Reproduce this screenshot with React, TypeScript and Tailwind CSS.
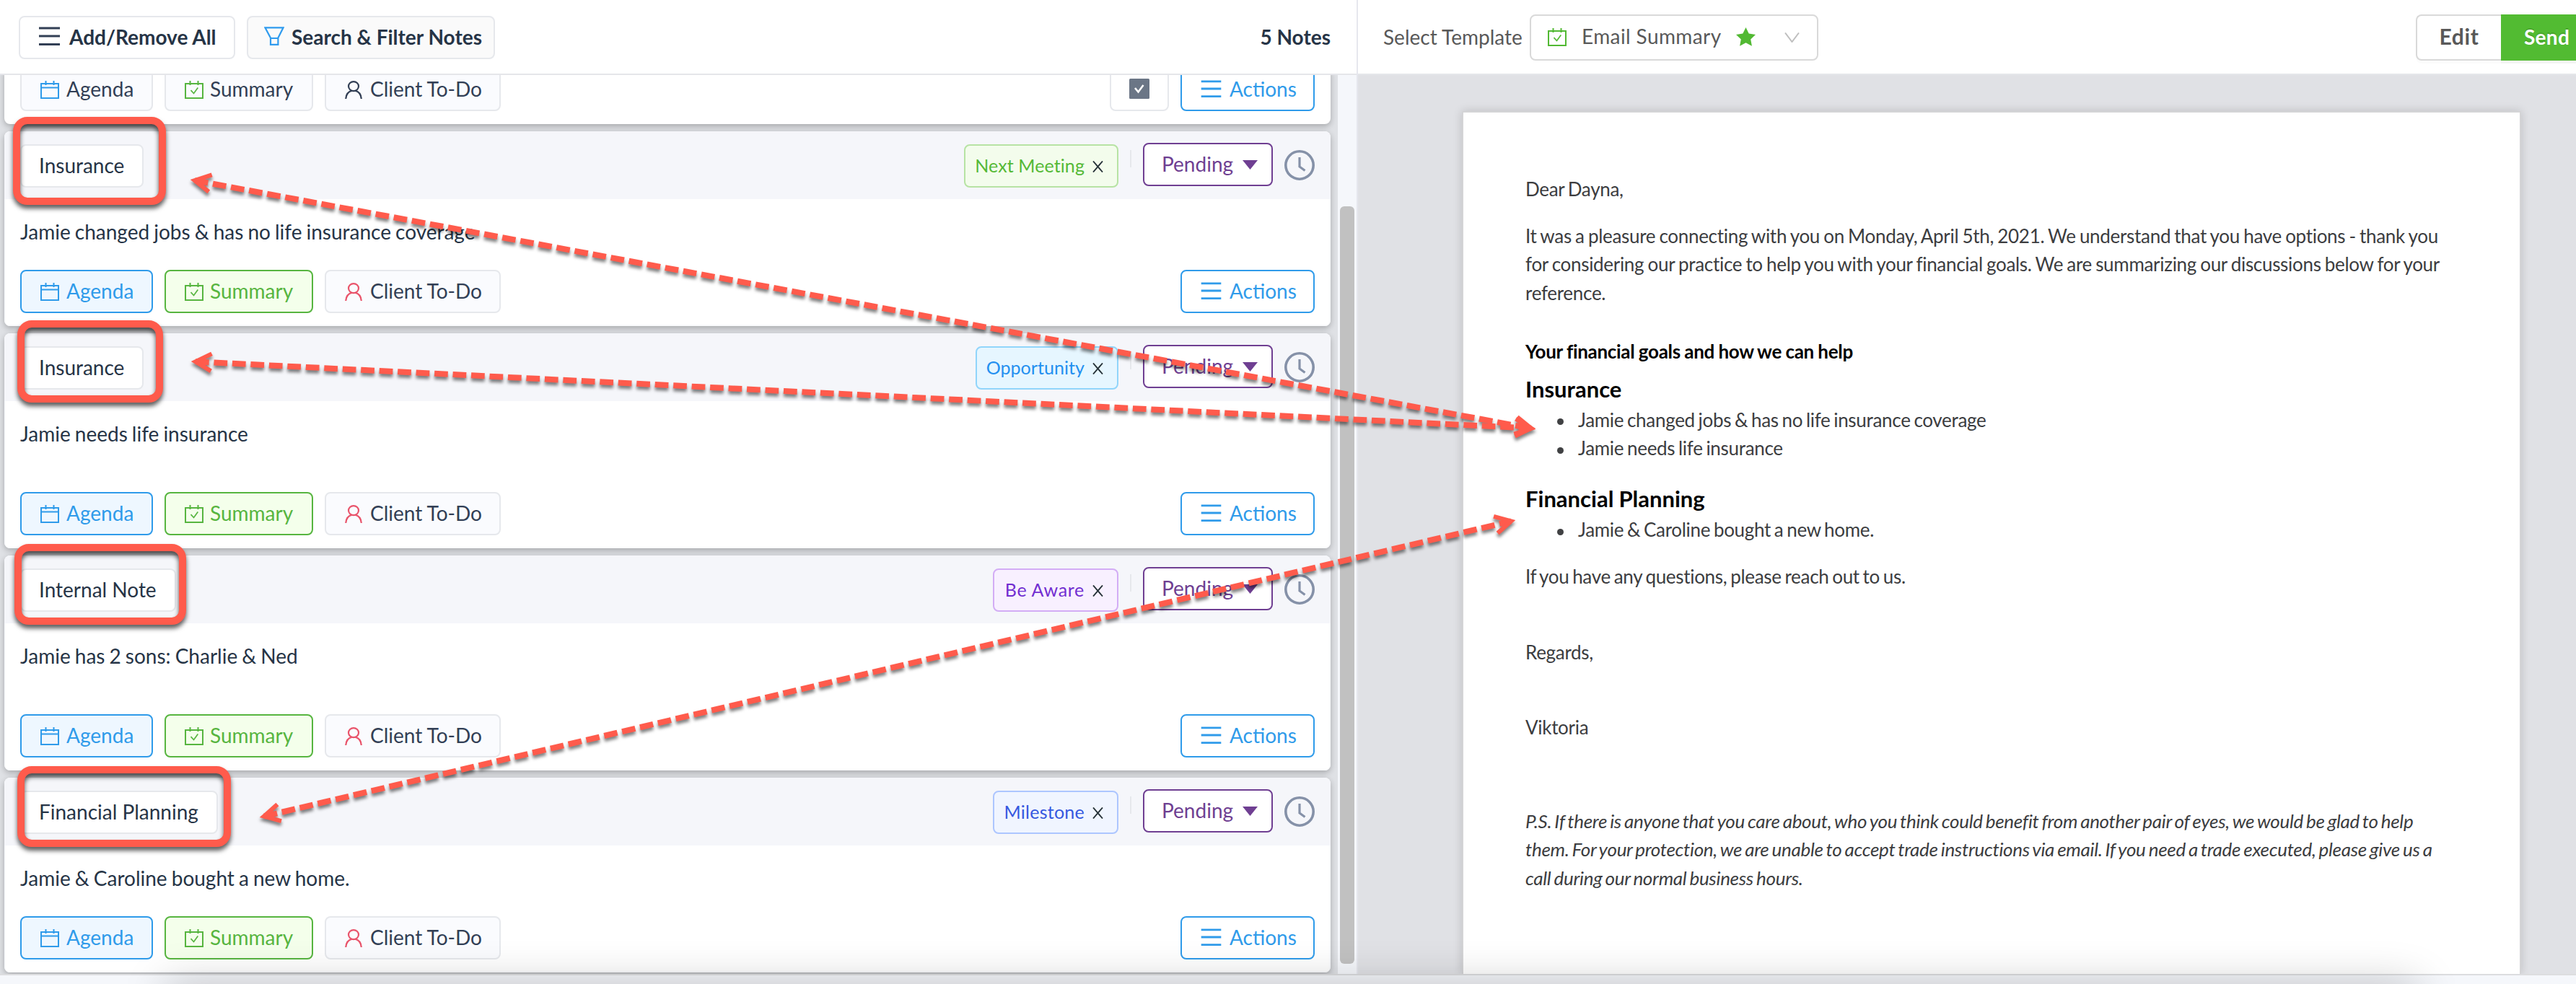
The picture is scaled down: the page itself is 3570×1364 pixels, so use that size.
import type { ReactNode } from 'react'
import clsx from 'clsx'

interface Note {
  id: number
  title: string
  text: string
  tag: string
  tagClass: string
  heightClass: string
}

interface Point {
  x: number
  y: number
}

const notes: Note[] = [
  {
    id: 1,
    title: 'Insurance',
    text: 'Jamie changed jobs & has no life insurance coverage',
    tag: 'Next Meeting',
    tagClass: 'w-[214px] border-[#b7e3a4] bg-[#f3fcec] text-[#55b936] tracking-[0.1px]',
    heightClass: 'h-[270px]',
  },
  {
    id: 2,
    title: 'Insurance',
    text: 'Jamie needs life insurance',
    tag: 'Opportunity',
    tagClass: 'w-[198px] border-[#91d5fb] bg-[#e6f6ff] text-[#2490f0] tracking-[0.05px]',
    heightClass: 'h-[298px]',
  },
  {
    id: 3,
    title: 'Internal Note',
    text: 'Jamie has 2 sons: Charlie & Ned',
    tag: 'Be Aware',
    tagClass: 'w-[174px] border-[#d3adf5] bg-[#f8f0ff] text-[#722ed1] tracking-[0.7px]',
    heightClass: 'h-[298px]',
  },
  {
    id: 4,
    title: 'Financial Planning',
    text: 'Jamie & Caroline bought a new home.',
    tag: 'Milestone',
    tagClass: 'w-[174px] border-[#adc6ff] bg-[#f0f5ff] text-[#3558e0] tracking-[0.25px]',
    heightClass: 'h-[270px]',
  },
]

function MenuIcon({ className }: { className?: string }) {
  return (
    <svg viewBox="0 0 29 26" className={clsx('h-[26px] w-[29px] shrink-0', className)} fill="none" stroke="currentColor" strokeWidth="3">
      <path d="M0 2h29M0 13h29M0 24.5h29" />
    </svg>
  )
}

function FunnelIcon() {
  return (
    <svg viewBox="0 0 28 26" className="h-[26px] w-[28px] shrink-0 text-[#2f9bee]" fill="none" stroke="currentColor" strokeWidth="2.2">
      <path d="M1.4 1.3h25.2L19.4 15.6v9.2H9V15.6L1.4 1.3zM9 16h10.4" />
    </svg>
  )
}

function CalendarIcon({ className, checked }: { className?: string; checked?: boolean }) {
  return (
    <svg viewBox="0 0 26 25" className={clsx('h-[25px] w-[26px] shrink-0', className)} fill="none" stroke="currentColor" strokeWidth="2">
      <path d="M1 4h24v20H1zM7.5 0v6M18.5 0v6" />
      {checked ? <path d="M8.5 13.2l4 4.3 5.8-8" strokeWidth="1.7" /> : <path d="M1 9.5h24" />}
    </svg>
  )
}

function PersonIcon({ className }: { className?: string }) {
  return (
    <svg viewBox="0 0 24 25" className={clsx('h-[25px] w-[24px] shrink-0', className)} fill="none" stroke="currentColor" strokeWidth="2.2">
      <ellipse cx="12" cy="7.6" rx="7" ry="6.5" />
      <path d="M1.2 25c.4-6 4-10.2 8.6-11.4M22.8 25c-.4-6-4-10.2-8.6-11.4" />
    </svg>
  )
}

function ClockIcon() {
  return (
    <svg viewBox="0 0 42 42" className="mt-[26px] size-[42px] shrink-0 text-[#8591a8]" fill="none" stroke="currentColor" strokeWidth="3.6">
      <circle cx="21" cy="21" r="19.2" />
      <path d="M21 10v13l7.5 5.5" strokeWidth="3.2" />
    </svg>
  )
}

function NoteButton({ className, children }: { className?: string; children: ReactNode }) {
  return (
    <button className={clsx('flex h-[60px] shrink-0 items-center rounded-lg border-2 pl-[26px]', className)}>
      {children}
    </button>
  )
}

function NoteActions({ selected }: { selected?: boolean }) {
  return (
    <div className="flex gap-4 whitespace-nowrap text-[28px] leading-[34px]">
      <NoteButton
        className={clsx(
          'w-[184px] gap-[10px]',
          selected ? 'border-[#2f9bea] bg-[#eef7ff] text-[#2f9bea]' : 'border-[#e6e8ec] bg-[#fafbfe] text-[#323f55]'
        )}
      >
        <CalendarIcon className="text-[#2f9bea]" />
        <span className="pb-0.5">Agenda</span>
      </NoteButton>
      <NoteButton
        className={clsx(
          'w-[206px] gap-[9px]',
          selected ? 'border-[#57b540] bg-[#f4ffeb] text-[#57b540]' : 'border-[#e6e8ec] bg-[#fafbfe] text-[#323f55]'
        )}
      >
        <CalendarIcon checked className="text-[#57b540]" />
        <span className="pb-0.5">Summary</span>
      </NoteButton>
      <NoteButton className="w-[244px] gap-[11px] border-[#e6e8ec] bg-[#fafbfe] text-[#323f55]">
        <PersonIcon className={selected ? 'text-[#e9546b]' : 'text-[#323f55]'} />
        <span className="pb-0.5">Client To-Do</span>
      </NoteButton>

      <div className="ml-auto flex gap-4">
        {!selected && (
          <button className="flex h-[60px] w-[82px] items-center justify-center rounded-lg border-2 border-[#e6e8ec] bg-white">
            <svg viewBox="0 0 28 28" className="mb-0.5 size-[28px]" fill="none">
              <rect width="28" height="28" rx="1.5" fill="#6b7686" />
              <path d="M8 13l4.500 5.500L19.500 9" stroke="#fff" strokeWidth="2.6" />
            </svg>
          </button>
        )}
        <NoteButton className="w-[186px] gap-[11px] border-[#2f9bea] bg-white text-[#2f9bea]">
          <MenuIcon className="mb-0.5 scale-x-[0.97] scale-y-[0.92]" />
          <span className="pb-0.5">Actions</span>
        </NoteButton>
      </div>
    </div>
  )
}

function NoteCard({ note }: { note: Note }) {
  return (
    <article
      className={clsx(
        'flex shrink-0 flex-col overflow-hidden rounded-lg bg-white shadow-[0_3px_8px_rgba(0,0,0,0.26)]',
        note.heightClass
      )}
    >
      <div className="flex h-[94px] shrink-0 items-start gap-4 bg-[#f5f6fa] px-[22px]">
        <div className="mt-[18px] flex h-[60px] items-center rounded-lg border-2 border-[#e6e8ec] bg-white pb-0.5 pl-[24px] pr-[25px] text-[28px] leading-[34px]">
          {note.title}
        </div>
        <div
          className={clsx(
            'ml-auto mt-[18px] flex h-[60px] items-center justify-end gap-[11px] whitespace-nowrap rounded-lg border-2 pr-[19px] text-[25px]',
            note.tagClass
          )}
        >
          <span>{note.tag}</span>
          <svg viewBox="0 0 15 16" className="mt-0.5 h-[16px] w-[15px]" fill="none" stroke="#263238" strokeWidth="1.9">
            <path d="M1 .5l13 15M14 .5L1 15.5" />
          </svg>
        </div>
        <div className="mt-[26px] h-6 w-0.5 bg-[#e6e8ec]" />
        <button className="mt-4 flex h-[60px] w-[180px] items-center gap-[13px] rounded-lg border-2 border-[#6f3f92] bg-white pl-[24px] text-[28px] text-[#6f3f92]">
          <span className="pb-0.5">Pending</span>
          <svg viewBox="0 0 21 13" className="h-[13px] w-[21px]" fill="currentColor">
            <path d="M0 0h21L10.500 13z" />
          </svg>
        </button>
        <ClockIcon />
      </div>
      <div className="flex flex-1 flex-col justify-between border-x-2 border-b-2 border-[#f9fafc] px-5 pb-4 pt-7">
        <p className="text-[28px] leading-[34px] [word-spacing:-1.1px]">{note.text}</p>
        <NoteActions selected />
      </div>
    </article>
  )
}

function NotesPanel() {
  return (
    <section className="flex w-[1882px] shrink-0 flex-col border-r-2 border-[#e6e7ee] text-[#263446]">
      <header className="flex h-[104px] shrink-0 items-center gap-4 border-b-2 border-[#e5e6ea] bg-white pl-[26px] pr-[36px] text-[28px] font-bold">
        <button className="mt-0.5 flex h-[60px] w-[300px] items-center gap-[13px] rounded-lg border-2 border-[#e6e8ec] bg-white pl-[26px]">
          <MenuIcon className="mb-1 text-[#323f55]" />
          <span className="whitespace-nowrap pb-0.5">Add/Remove All</span>
        </button>
        <button className="mt-0.5 flex h-[60px] w-[344px] items-center gap-[10px] rounded-lg border-2 border-[#e6e8ec] bg-[#fafafa] pl-[22px]">
          <span className="mb-1">
            <FunnelIcon />
          </span>
          <span className="whitespace-nowrap pb-0.5">Search &amp; Filter Notes</span>
        </button>
        <span className="ml-auto">5 Notes</span>
      </header>

      <div className="flex min-h-0 flex-1">
        {/* The list is scrolled, so the first card only shows its button row */}
        <div className="flex min-w-0 flex-1 flex-col gap-[10px] overflow-hidden bg-[#dfe1e5] pl-[6px] pr-[10px]">
          <article className="-mt-[10px] flex h-[78px] shrink-0 flex-col justify-end rounded-lg bg-white px-[22px] pb-[18px] shadow-[0_3px_8px_rgba(0,0,0,0.26)]">
            <NoteActions />
          </article>
          {notes.map((note) => (
            <NoteCard key={note.id} note={note} />
          ))}
        </div>
        <div className="flex w-[26px] justify-center bg-[#f5f7fb] pb-[14px] pt-[182px]">
          <div className="w-5 rounded-md bg-[#c1c1c1]" />
        </div>
      </div>
    </section>
  )
}

function Bullet({ children }: { children: ReactNode }) {
  return (
    <li className="flex items-center gap-5 pl-[44px]">
      <span className="mt-[5px] size-[9px] rounded-full bg-[#404143]" />
      <span>{children}</span>
    </li>
  )
}

function Letter() {
  return (
    <div className="mx-auto w-[1468px] flex-1 whitespace-nowrap border-x-2 border-t-2 border-[#d4d4d6] bg-white pl-[86px] pt-[87px] text-[26px] leading-[39.7px] tracking-[-0.3px] text-[#3c3d3f] shadow-[0_0_12px_rgba(0,0,0,0.16)] [word-spacing:-1.6px]">
      <p>Dear Dayna,</p>
      <p className="mt-[25px] [word-spacing:-1.15px]">
        It was a pleasure connecting with you on Monday, April 5th, 2021. We understand that you have options - thank you
        <br />
        for considering our practice to help you with your financial goals. We are summarizing our discussions below for your
        <br />
        reference.
      </p>
      <p className="mt-[41px] font-bold text-black [word-spacing:-0.6px]">Your financial goals and how we can help</p>
      <h3 className="mt-[13px] text-[31px] font-bold leading-[37px] tracking-normal text-black [word-spacing:-0.5px]">Insurance</h3>
      <ul className="mt-[5px]">
        <Bullet>Jamie changed jobs &amp; has no life insurance coverage</Bullet>
        <Bullet>Jamie needs life insurance</Bullet>
      </ul>
      <h3 className="mt-[31px] text-[31px] font-bold leading-[37px] tracking-normal text-black [word-spacing:-0.5px]">Financial Planning</h3>
      <ul className="mt-[5px]">
        <Bullet>Jamie &amp; Caroline bought a new home.</Bullet>
      </ul>
      <p className="mt-[25px]">If you have any questions, please reach out to us.</p>
      <p className="mt-[66px]">Regards,</p>
      <p className="mt-[64px]">Viktoria</p>
      <p className="mt-[90px] italic [word-spacing:-1.7px]">
        P.S. If there is anyone that you care about, who you think could benefit from another pair of eyes, we would be glad to help
        <br />
        them. For your protection, we are unable to accept trade instructions via email. If you need a trade executed, please give us a
        <br />
        call during our normal business hours.
      </p>
    </div>
  )
}

function PreviewPanel() {
  return (
    <section className="flex min-w-0 flex-1 flex-col">
      <header className="flex h-[104px] shrink-0 items-center overflow-hidden border-b-2 border-[#e5e6ea] bg-white pl-[35px] text-[28px] text-[#595959]">
        <span className="w-[203px] shrink-0 whitespace-nowrap">Select Template</span>
        <div className="mt-0.5 flex h-[64px] w-[400px] shrink-0 items-center rounded-lg border-2 border-[#d9d9d9] pl-[23px]">
          <CalendarIcon checked className="mb-0.5 text-[#52b933]" />
          <span className="ml-[21px] w-[214px] whitespace-nowrap pb-1 tracking-[0.4px]">Email Summary</span>
          <svg viewBox="0 0 27 26" className="mb-0.5 h-[26px] w-[27px]" fill="#52b933">
            <path d="M13.5 0l4.200 8.600 9.300 1.300-6.800 6.500 1.700 9.400-8.400-4.500-8.400 4.500 1.700-9.400L0 9.900l9.300-1.300z" />
          </svg>
          <svg viewBox="0 0 21 14" className="ml-[40px] h-[14px] w-[21px]" fill="none" stroke="#bfbfbf" strokeWidth="2">
            <path d="M1 .5l9.500 12.500L20 .5" />
          </svg>
        </div>
        <div className="ml-auto mt-0.5 flex shrink-0 font-bold">
          <button className="flex h-[64px] w-[118px] items-center justify-center rounded-l-lg border-2 border-r-0 border-[#d9d9d9] bg-white pb-[3px] text-[30px] tracking-[0.6px] shadow-[0_4px_0_rgba(0,0,0,0.015)]">
            Edit
          </button>
          <button className="flex h-[64px] w-[104px] items-center whitespace-nowrap bg-[#52bb32] pb-0.5 pl-8 text-[28px] tracking-[0.3px] text-white shadow-[0_4px_0_rgba(0,0,0,0.045)] [text-shadow:0_-2px_0_rgba(0,0,0,0.12)]">
            Send
          </button>
        </div>
      </header>
      <div className="flex min-h-0 flex-1 flex-col overflow-hidden bg-[#e0e1e5] pl-[144px] pr-[76px] pt-[50px]">
        <Letter />
      </div>
    </section>
  )
}

// Outlined callout drawn over a note title
function Callout({ className }: { className: string }) {
  return (
    <div
      className={clsx(
        'pointer-events-none absolute rounded-[20px] border-[10px] border-[#ff5b4c] [filter:drop-shadow(0_5px_3px_rgba(0,0,0,0.65))]',
        className
      )}
    />
  )
}

function arrowHead(tip: Point, from: Point) {
  const angle = Math.atan2(from.y - tip.y, from.x - tip.x)
  const at = (a: number, r: number, o: Point) => ({ x: o.x + Math.cos(a) * r, y: o.y + Math.sin(a) * r })
  const apex = at(angle, 6, tip)
  const a = at(angle + 0.5, 25, apex)
  const b = at(angle - 0.5, 25, apex)
  return `M${a.x} ${a.y}L${apex.x} ${apex.y}L${b.x} ${b.y}`
}

function Arrow({ from, to }: { from: Point; to: Point }) {
  const len = Math.hypot(to.x - from.x, to.y - from.y)
  const ux = (to.x - from.x) / len
  const uy = (to.y - from.y) / len
  return (
    <g>
      <line
        x1={from.x + ux * 6}
        y1={from.y + uy * 6}
        x2={to.x - ux * 6}
        y2={to.y - uy * 6}
        strokeWidth="8"
        strokeDasharray="18.7 6.8"
      />
      <path d={arrowHead(from, to)} strokeWidth="6" />
      <path d={arrowHead(to, from)} strokeWidth="6" />
    </g>
  )
}

export default function App() {
  return (
    <div className="relative flex h-[1364px] w-[3570px] flex-col overflow-hidden bg-[#f5f7fb] font-[Lato,sans-serif]">
      <main className="flex h-[1352px] shrink-0 border-b-2 border-[#dcdddf]">
        <NotesPanel />
        <PreviewPanel />
      </main>

      {/* Soft shadow rising from below the page edge */}
      <div className="pointer-events-none absolute left-[230px] top-[1364px] h-[120px] w-[3120px] shadow-[0_0_60px_rgba(0,0,0,0.22)]" />

      <Callout className="left-[18px] top-[162px] h-[122px] w-[212px]" />
      <Callout className="left-[24px] top-[444px] h-[114px] w-[202px]" />
      <Callout className="left-[20px] top-[754px] h-[112px] w-[238px]" />
      <Callout className="left-[24px] top-[1062px] h-[112px] w-[296px]" />

      <svg
        viewBox="0 0 3570 1364"
        className="pointer-events-none absolute left-0 top-0 h-[1364px] w-[3570px] [filter:drop-shadow(0_4px_2px_rgba(0,0,0,0.5))]"
        fill="none"
        stroke="#ff5b4c"
      >
        <Arrow from={{ x: 264, y: 249 }} to={{ x: 2128, y: 595 }} />
        <Arrow from={{ x: 265, y: 501 }} to={{ x: 2128, y: 594 }} />
        <Arrow from={{ x: 360, y: 1133 }} to={{ x: 2100, y: 721 }} />
      </svg>
    </div>
  )
}
